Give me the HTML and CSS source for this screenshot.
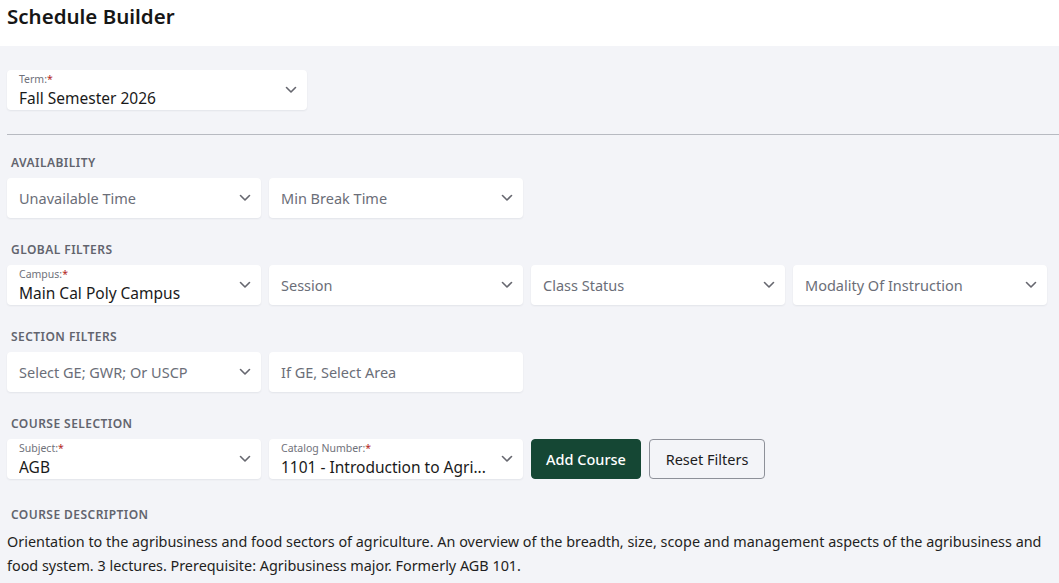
FILE: index.html
```html
<!DOCTYPE html>
<html lang="en">
<head>
<meta charset="utf-8">
<title>Schedule Builder</title>
<link rel="stylesheet" href="styles.css">
</head>
<body>
<header class="topbar">
  <h1 class="title">Schedule Builder</h1>
</header>
<main class="page">
  <div class="select term">
    <div class="select-body">
      <span class="select-label">Term:<span class="req">*</span></span>
      <span class="select-value">Fall Semester 2026</span>
    </div>
    <svg class="chev" viewBox="0 0 12 8"><path d="M1.5 1.5 6 6l4.5-4.5"/></svg>
  </div>

  <hr class="divider">

  <section class="group">
    <h2 class="group-title">Availability</h2>
    <div class="row">
      <div class="select"><span class="placeholder">Unavailable Time</span><svg class="chev" viewBox="0 0 12 8"><path d="M1.5 1.5 6 6l4.5-4.5"/></svg></div>
      <div class="select"><span class="placeholder">Min Break Time</span><svg class="chev" viewBox="0 0 12 8"><path d="M1.5 1.5 6 6l4.5-4.5"/></svg></div>
    </div>
  </section>

  <section class="group">
    <h2 class="group-title">Global Filters</h2>
    <div class="row">
      <div class="select">
        <div class="select-body">
          <span class="select-label">Campus:<span class="req">*</span></span>
          <span class="select-value">Main Cal Poly Campus</span>
        </div>
        <svg class="chev" viewBox="0 0 12 8"><path d="M1.5 1.5 6 6l4.5-4.5"/></svg>
      </div>
      <div class="select"><span class="placeholder">Session</span><svg class="chev" viewBox="0 0 12 8"><path d="M1.5 1.5 6 6l4.5-4.5"/></svg></div>
      <div class="select"><span class="placeholder">Class Status</span><svg class="chev" viewBox="0 0 12 8"><path d="M1.5 1.5 6 6l4.5-4.5"/></svg></div>
      <div class="select"><span class="placeholder">Modality Of Instruction</span><svg class="chev" viewBox="0 0 12 8"><path d="M1.5 1.5 6 6l4.5-4.5"/></svg></div>
    </div>
  </section>

  <section class="group">
    <h2 class="group-title">Section Filters</h2>
    <div class="row">
      <div class="select"><span class="placeholder">Select GE; GWR; Or USCP</span><svg class="chev" viewBox="0 0 12 8"><path d="M1.5 1.5 6 6l4.5-4.5"/></svg></div>
      <div class="select"><span class="placeholder">If GE, Select Area</span></div>
    </div>
  </section>

  <section class="group">
    <h2 class="group-title">Course Selection</h2>
    <div class="row">
      <div class="select">
        <div class="select-body">
          <span class="select-label">Subject:<span class="req">*</span></span>
          <span class="select-value">AGB</span>
        </div>
        <svg class="chev" viewBox="0 0 12 8"><path d="M1.5 1.5 6 6l4.5-4.5"/></svg>
      </div>
      <div class="select">
        <div class="select-body">
          <span class="select-label">Catalog Number:<span class="req">*</span></span>
          <span class="select-value">1101 - Introduction to Agri...</span>
        </div>
        <svg class="chev" viewBox="0 0 12 8"><path d="M1.5 1.5 6 6l4.5-4.5"/></svg>
      </div>
      <div class="actions">
        <button class="btn btn-primary">Add Course</button>
        <button class="btn btn-outline">Reset Filters</button>
      </div>
    </div>
  </section>

  <section class="group desc">
    <h2 class="group-title">Course Description</h2>
    <p class="desc-text">Orientation to the agribusiness and food sectors of agriculture. An overview of the breadth, size, scope and management aspects of the agribusiness and food system. 3 lectures. Prerequisite: Agribusiness major. Formerly AGB 101.</p>
  </section>
</main>
</body>
</html>
```

FILE: styles.css
```css
* { box-sizing: border-box; }

html, body {
  margin: 0;
  padding: 0;
}

body {
  font-family: "Noto Sans", "Open Sans", sans-serif;
  color: #1c1c1e;
  background: #f3f4f8;
  overflow: hidden;
}

.topbar {
  background: #ffffff;
  height: 46px;
  padding: 3px 7px 0;
}

.title {
  margin: 0;
  font-size: 20.5px;
  line-height: 26px;
  font-weight: 600;
  color: #161616;
}

.page {
  padding: 24px 12px 0 7px;
}

.select {
  height: 40px;
  background: #ffffff;
  border-radius: 4px;
  box-shadow: 0 1px 2px rgba(20, 24, 40, 0.07);
  display: flex;
  align-items: center;
  padding: 0 10px 0 12px;
  min-width: 0;
}

.term {
  width: 300px;
}

.select-body {
  flex: 1;
  min-width: 0;
  display: flex;
  flex-direction: column;
  align-self: flex-start;
  padding-top: 2px;
}

.select-label {
  font-size: 10.5px;
  line-height: 14px;
  color: #6f717a;
}

.req {
  color: #b3261e;
}

.select-value {
  margin-top: 2px;
  font-size: 15.5px;
  line-height: 21px;
  color: #1a1a1a;
  white-space: nowrap;
  overflow: hidden;
}

.placeholder {
  flex: 1;
  font-size: 14.5px;
  color: #6b6e78;
  white-space: nowrap;
  overflow: hidden;
}

.chev {
  width: 12px;
  height: 8px;
  flex: none;
  margin-left: 8px;
  fill: none;
  stroke: #66676f;
  stroke-width: 1.6;
  stroke-linecap: round;
  stroke-linejoin: round;
}

.divider {
  border: 0;
  border-top: 1px solid #b7bac1;
  margin: 24px -12px 0 0;
}

.group {
  margin-top: 19px;
}

.group + .group {
  margin-top: 23px;
}

.group-title {
  margin: 0 0 7px;
  padding: 1px 0 0 4px;
  font-size: 12px;
  line-height: 16px;
  font-weight: 600;
  text-transform: uppercase;
  color: #62646e;
  letter-spacing: 0.45px;
}

.row {
  display: grid;
  grid-template-columns: repeat(4, 1fr);
  gap: 8px;
}

.actions {
  display: flex;
  gap: 8px;
}

.btn {
  height: 40px;
  border-radius: 4px;
  font-family: inherit;
  font-size: 14.5px;
  padding: 0;
  white-space: nowrap;
  cursor: pointer;
}

.btn-primary {
  background: #154734;
  border: 1px solid #154734;
  color: #ffffff;
  font-weight: 500;
  width: 110px;
}

.btn-outline {
  background: transparent;
  border: 1px solid #8d9099;
  color: #1c1c1e;
  width: 116px;
}

.group.desc {
  margin-top: 27px;
}

.desc-text {
  margin: 0;
  font-size: 14.4px;
  line-height: 24px;
  color: #1f1f22;
}
```
